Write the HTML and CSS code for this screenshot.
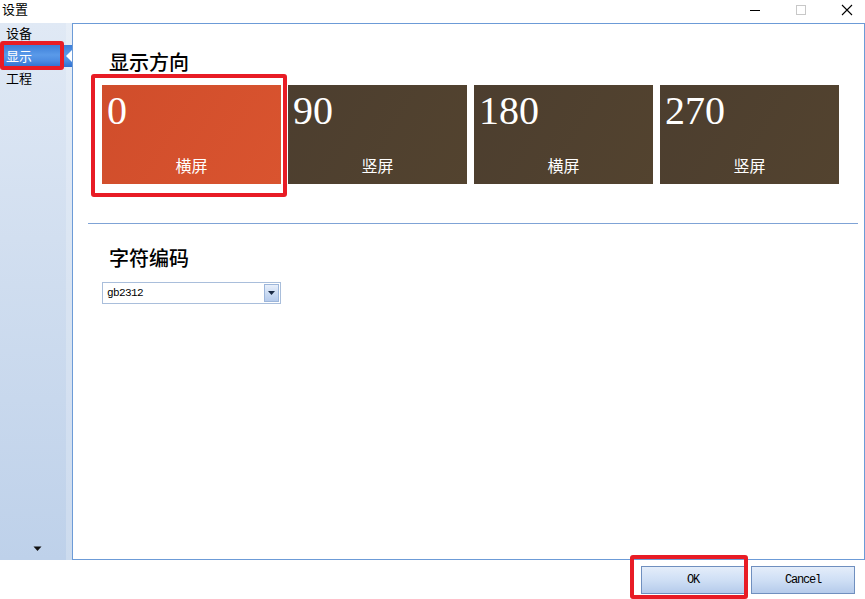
FILE: index.html
```html
<!DOCTYPE html>
<html lang="zh-CN">
<head>
<meta charset="utf-8">
<title>设置</title>
<link rel="stylesheet" href="styles.css">
</head>
<body>
<div class="window">
  <header class="titlebar">
    <span class="title">设置</span>
    <div class="controls">
      <span class="ctl">
        <svg width="12" height="12" viewBox="0 0 12 12"><line x1="1" y1="6.5" x2="11" y2="6.5" stroke="#000" stroke-width="1"/></svg>
      </span>
      <span class="ctl">
        <svg width="12" height="12" viewBox="0 0 12 12"><rect x="1.5" y="1.5" width="9" height="9" fill="none" stroke="#c8c8c8" stroke-width="1"/></svg>
      </span>
      <span class="ctl">
        <svg width="12" height="12" viewBox="0 0 12 12"><path d="M1 1 L11 11 M11 1 L1 11" stroke="#000" stroke-width="1.1"/></svg>
      </span>
    </div>
  </header>

  <div class="main">
    <aside class="sidebar">
      <ul class="nav">
        <li class="nav-item">设备</li>
        <li class="nav-item active">显示<span class="pointer"></span></li>
        <li class="nav-item">工程</li>
      </ul>
      <div class="scroll-down">
        <svg class="scroll-icon" width="9" height="6" viewBox="0 0 9 6"><path d="M0.5 0.5 H8.5 L4.5 5 Z" fill="#111"/></svg>
      </div>
    </aside>

    <section class="panel">
      <h2 class="heading">显示方向</h2>
      <div class="tiles">
        <div class="tile tile-selected">
          <span class="tile-num">0</span>
          <span class="tile-label">横屏</span>
        </div>
        <div class="tile">
          <span class="tile-num">90</span>
          <span class="tile-label">竖屏</span>
        </div>
        <div class="tile">
          <span class="tile-num">180</span>
          <span class="tile-label">横屏</span>
        </div>
        <div class="tile">
          <span class="tile-num">270</span>
          <span class="tile-label">竖屏</span>
        </div>
      </div>
      <div class="separator"></div>
      <h2 class="heading heading-second">字符编码</h2>
      <div class="combo">
        <span class="combo-text">gb2312</span>
        <span class="combo-btn">
          <svg width="7" height="4" viewBox="0 0 7 4"><path d="M0 0 H7 L3.5 4 Z" fill="#1a2a44"/></svg>
        </span>
      </div>
    </section>
  </div>

  <footer class="footer">
    <button class="btn">OK</button>
    <button class="btn">Cancel</button>
  </footer>

  <div class="mark mark-nav"></div>
  <div class="mark mark-tile"></div>
  <div class="mark mark-ok"></div>
</div>
</body>
</html>
```

FILE: styles.css
```css
* { box-sizing: border-box; }

html, body {
  margin: 0;
  padding: 0;
  background: #ffffff;
}

body {
  font-family: "Noto Sans CJK SC", "Noto Sans", sans-serif;
  color: #000;
}

.window {
  position: relative;
  width: 865px;
  height: 599px;
  overflow: hidden;
  background: #ffffff;
  display: flex;
  flex-direction: column;
}

/* Title bar */
.titlebar {
  height: 23px;
  flex: none;
  display: flex;
  align-items: flex-start;
  justify-content: space-between;
}

.title {
  font-size: 13px;
  line-height: 18px;
  padding-left: 2px;
}

.controls {
  display: flex;
  padding-top: 4px;
  padding-right: 12px;
  gap: 34px;
}

.ctl {
  display: flex;
  width: 12px;
  height: 12px;
}

/* Main */
.main {
  height: 537px;
  flex: none;
  display: flex;
}

.sidebar {
  width: 72px;
  flex: none;
  display: flex;
  flex-direction: column;
  background: linear-gradient(180deg, #e0e9f5 0%, #d2dff0 40%, #bed1ea 100%);
  box-shadow: inset -6px 0 0 rgba(255, 255, 255, 0.22);
}

.nav {
  list-style: none;
  margin: -1px 0 0 0;
  padding: 0;
}

.nav-item {
  position: relative;
  height: 22px;
  line-height: 22px;
  font-size: 13px;
  padding-left: 6px;
  color: #000;
}

.nav-item.active {
  margin-top: 1px;
  color: #fff;
  background: linear-gradient(180deg, #3c7ed8 0%, #5a9ae9 45%, #4d8de2 70%, #2f70d0 100%);
}

.pointer {
  position: absolute;
  right: 0;
  top: 5px;
  width: 0;
  height: 0;
  border-top: 6px solid transparent;
  border-bottom: 6px solid transparent;
  border-right: 6px solid #ffffff;
}

.scroll-down {
  margin-top: auto;
  display: flex;
  padding-left: 33px;
  padding-bottom: 8px;
}

.scroll-icon {
  display: block;
}

/* Panel */
.panel {
  width: 793px;
  border: 1px solid #6c9bd7;
  background: #ffffff;
  padding: 26px 0 0 29px;
}

.heading {
  margin: 0 0 0 7px;
  font-size: 20px;
  line-height: 24px;
  font-weight: 500;
}

.tiles {
  display: flex;
  gap: 7px;
  margin-top: 11px;
}

.tile {
  width: 179px;
  height: 99px;
  display: flex;
  flex-direction: column;
  justify-content: space-between;
  padding: 6px 5px 9px 5px;
  color: #ffffff;
  background: linear-gradient(120deg, #4c3e2f 0%, #53432f 100%);
}

.tile-selected {
  background: linear-gradient(120deg, #d04d2b 0%, #d9542f 100%);
}

.tile-num {
  font-family: "Liberation Serif", serif;
  font-size: 40px;
  line-height: 40px;
}

.tile-label {
  text-align: center;
  font-size: 16px;
  line-height: 20px;
}

.separator {
  height: 1px;
  background: #7fa3d6;
  margin: 39px 6px 0 -14px;
}

.heading-second {
  margin-top: 22px;
}

.combo {
  margin-top: 12px;
  width: 179px;
  height: 22px;
  border: 1px solid #a9bedb;
  display: flex;
  align-items: center;
  justify-content: space-between;
  padding: 0 1px 0 4px;
}

.combo-text {
  font-family: "Liberation Mono", monospace;
  font-size: 11px;
  letter-spacing: -0.6px;
}

.combo-btn {
  width: 15px;
  height: 18px;
  border: 1px solid #9db6da;
  background: linear-gradient(180deg, #e8effb 0%, #c9daf2 55%, #b6cbec 100%);
  display: flex;
  align-items: center;
  justify-content: center;
}

/* Footer */
.footer {
  flex: 1;
  display: flex;
  justify-content: flex-end;
  align-items: flex-start;
  gap: 6px;
  padding: 6px 10px 0 0;
}

.btn {
  width: 104px;
  height: 28px;
  border: 1px solid #6f8fbf;
  background: linear-gradient(180deg, #e4edfa 0%, #cfdff5 50%, #b5cbeb 100%);
  font-family: "Liberation Mono", monospace;
  font-size: 12px;
  letter-spacing: -1.2px;
  color: #000;
  padding: 0;
}

/* Annotation marks */
.mark {
  position: absolute;
  border: 4px solid #e81c25;
  border-radius: 3px;
  pointer-events: none;
}

.mark-nav {
  left: 0;
  top: 41px;
  width: 64px;
  height: 29px;
}

.mark-tile {
  left: 91px;
  top: 74px;
  width: 196px;
  height: 123px;
}

.mark-ok {
  left: 630px;
  top: 555px;
  width: 118px;
  height: 44px;
}
```
